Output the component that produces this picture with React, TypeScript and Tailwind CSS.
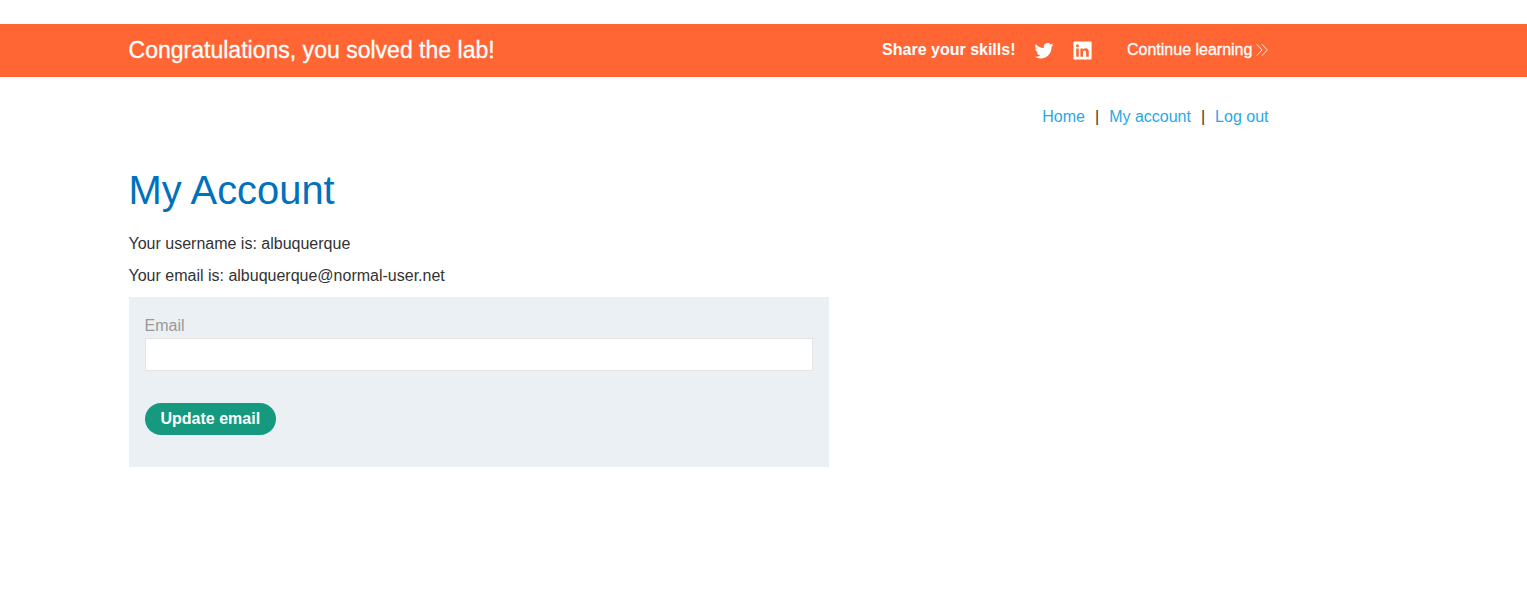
const navLinks = ["Home", "My account", "Log out"];

function TwitterIcon() {
  return (
    <svg viewBox="0 0 24 24" className="h-5 w-5 fill-white" aria-label="Twitter">
      <path d="M23.4 4.8a9.6 9.6 0 0 1-2.7.75 4.7 4.7 0 0 0 2.05-2.6 9.2 9.2 0 0 1-2.95 1.12 4.66 4.66 0 0 0-7.95 4.25A13.2 13.2 0 0 1 2.25 3.45a4.66 4.66 0 0 0 1.44 6.2 4.6 4.6 0 0 1-2.1-.57v.06a4.66 4.66 0 0 0 3.73 4.56 4.7 4.7 0 0 1-2.1.08 4.66 4.66 0 0 0 4.35 3.23A9.35 9.35 0 0 1 .7 18.95a13.2 13.2 0 0 0 7.14 2.1c8.6 0 13.54-7.2 13.2-13.8A9.4 9.4 0 0 0 23.4 4.8z" />
    </svg>
  );
}

function LinkedInIcon() {
  return (
    <svg viewBox="0 0 19 19" className="h-[19px] w-[19px]" aria-label="LinkedIn">
      <path
        className="fill-white"
        fillRule="evenodd"
        d="M1.6.4h15.8c.7 0 1.2.5 1.2 1.2v15.8c0 .7-.5 1.2-1.2 1.2H1.6c-.7 0-1.2-.5-1.2-1.2V1.6C.4.9.9.4 1.6.4zM3.2 7.4V15.8h2.6V7.4zM4.5 3.2a1.5 1.5 0 1 0 0 3 1.5 1.5 0 0 0 0-3zM7.4 7.4V15.8H10V11.5c0-1.2.5-2 1.6-2s1.5.8 1.5 2V15.8h2.7V11c0-2.4-1-3.8-3.1-3.8-1.3 0-2.1.6-2.7 1.4V7.4z"
      />
    </svg>
  );
}

function ChevronsIcon() {
  return (
    <svg viewBox="0 0 12 12" className="ml-[3.5px] h-3 w-3 fill-none stroke-white" strokeWidth="0.9">
      <path d="M.7.3 6 6 .7 11.7M6 .3 11.3 6 6 11.7" />
    </svg>
  );
}

export default function App() {
  return (
    <div className="min-h-screen bg-white pt-6 font-['Liberation_Sans',Arial,sans-serif] text-base leading-6 text-[#333332]">
      <header className="h-[53px] bg-[#ff6633] pl-[128.5px] text-white">
        <div className="flex h-full w-[1140px] items-center pr-[0.6px] pb-0.5">
          <h4 className="flex-1 text-[23.04px] leading-8 [-webkit-text-stroke:0.3px_white]">
            Congratulations, you solved the lab!
          </h4>
          <span className="font-bold">Share your skills!</span>
          <a href="#" className="mt-0.5 ml-[19px]"><TwitterIcon /></a>
          <a href="#" className="mt-0.5 ml-[18.5px]"><LinkedInIcon /></a>
          <a href="#" className="ml-[35px] flex items-center [-webkit-text-stroke:0.3px_white]">
            Continue learning
            <ChevronsIcon />
          </a>
        </div>
      </header>

      <main className="ml-[128.5px] w-[1140px]">
        <nav className="flex justify-end pt-7">
          {navLinks.map((label, i) => (
            <span key={label} className="flex">
              {i > 0 && <span className="mx-[10px]">|</span>}
              <a href="#" className="text-[#29a8e5]">{label}</a>
            </span>
          ))}
        </nav>

        <h1 className="mt-[37px] text-[39.9px] leading-[48px] text-[#0071bc]">My Account</h1>
        <p className="mt-[18px]">Your username is: albuquerque</p>
        <p className="mt-2">Your email is: albuquerque@normal-user.net</p>

        <form
          className="mt-[9px] flex h-[170px] w-[700px] flex-col items-start bg-[#eaf0f3] px-4 pt-[17px]"
          onSubmit={(e) => e.preventDefault()}
        >
          <label htmlFor="email" className="text-[#999999]">Email</label>
          <input
            id="email"
            type="email"
            className="h-[33px] w-full border border-[#e4e4e4] bg-white px-2 outline-none"
          />
          <button type="submit" className="mt-8 h-8 rounded-full bg-[#159a80] px-4 font-bold text-white">
            Update email
          </button>
        </form>
      </main>
    </div>
  );
}
